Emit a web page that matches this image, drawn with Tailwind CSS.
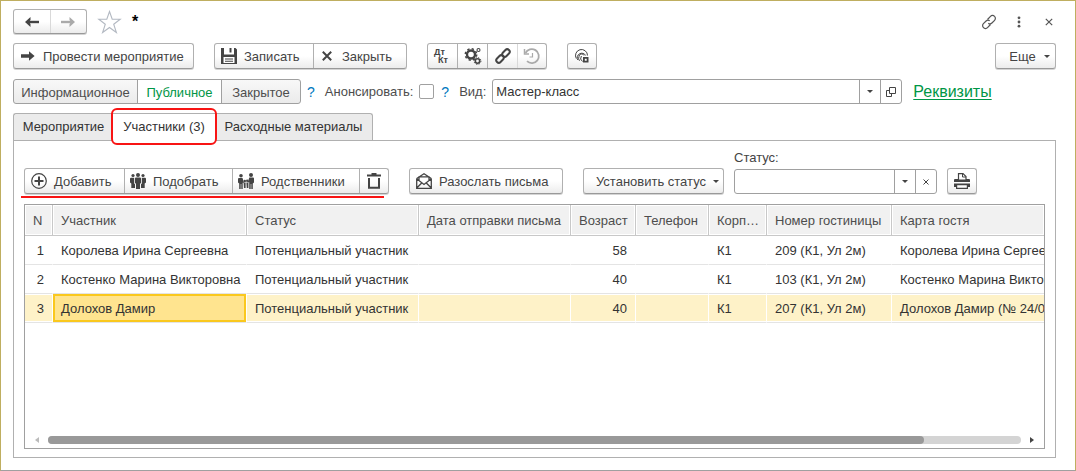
<!DOCTYPE html>
<html lang="ru">
<head>
<meta charset="utf-8">
<title>Мероприятие</title>
<script src="https://cdn.jsdelivr.net/npm/@tailwindcss/browser@4"></script>
</head>
<body class="bg-white font-['Liberation_Sans',Arial,sans-serif] text-[13px] leading-4 text-[#4d4d4d]">
<svg class="hidden" aria-hidden="true">
  <symbol id="caret" viewBox="0 0 8 4"><path d="M0 0h8L4 4z" fill="#444"/></symbol>
</svg>
<main class="flex h-screen min-h-[400px] flex-col border border-[#bfae60] border-b-[#a0a0a0] pt-2 pr-[19px] pb-3 pl-3">

  <header class="flex h-[25px] shrink-0 items-center">
    <div class="flex h-[25px] w-[74px] rounded-[3px] border border-[#b0b0b0] border-b-[#999] bg-linear-to-b from-white from-50% to-[#ececec] shadow-[0_1px_0_#d4d4d4]">
      <button aria-label="Назад" class="flex flex-1 items-center justify-center border-r border-[#d9d9d9]">
        <svg width="14" height="10" viewBox="0 0 14 10"><path d="M14 5H2" fill="none" stroke="#444" stroke-width="2.400"/><path d="M0 5L5.500 0v3L4 5l1.500 2v3z" fill="#444"/></svg>
      </button>
      <button aria-label="Вперед" class="flex flex-1 items-center justify-center">
        <svg width="14" height="10" viewBox="0 0 14 10"><path d="M0 5h12" fill="none" stroke="#aaa" stroke-width="2.400"/><path d="M14 5L8.500 0v3L10 5 8.500 7v3z" fill="#aaa"/></svg>
      </button>
    </div>
    <button aria-label="В избранное" class="ml-2.5">
      <svg width="25" height="24" viewBox="0 0 25 24"><path d="M12.500 1.500l2.700 7.700h8l-6.500 5 2.700 8.300-6.900-5-6.900 5 2.700-8.300-6.500-5h8z" fill="#fff" stroke="#b3b9c2" stroke-width="1.100"/></svg>
    </button>
    <h1 class="ml-2.5 text-base font-bold text-black">*</h1>
    <div class="mr-[3px] ml-auto flex items-center">
      <button aria-label="Получить ссылку">
        <svg width="16" height="16" viewBox="0 0 16 16" fill="none" stroke="#555" stroke-width="1.200"><path d="M6.500 5.500l3-3.200a2.700 2.700 0 0 1 4 .1 2.700 2.700 0 0 1 .1 3.900l-2.700 2.700a2.700 2.700 0 0 1-3.600.2M9.500 10.500l-3 3.200a2.700 2.700 0 0 1-4-.1 2.700 2.700 0 0 1-.1-3.900L5.100 7a2.700 2.700 0 0 1 3.600-.2"/></svg>
      </button>
      <button aria-label="Меню" class="ml-5">
        <svg width="4" height="12" viewBox="0 0 4 12" fill="#555"><circle cx="2" cy="1.800" r="1.400"/><circle cx="2" cy="6" r="1.400"/><circle cx="2" cy="10.200" r="1.400"/></svg>
      </button>
      <button aria-label="Закрыть окно" class="ml-6">
        <svg width="8" height="8" viewBox="0 0 8 8"><path d="M.8.8l6.400 6.400M7.200.8L.8 7.200" stroke="#555" stroke-width="1.200"/></svg>
      </button>
    </div>
  </header>

  <div class="mt-[9px] flex h-[27px] shrink-0 gap-5 text-[#444]">
    <button class="flex h-[26px] w-[181px] items-center rounded-[3px] border border-[#b0b0b0] border-b-[#999] bg-linear-to-b from-white from-50% to-[#ececec] pl-[7px] shadow-[0_1px_0_#d4d4d4]">
      <svg width="14" height="10" viewBox="0 0 14 10"><path d="M0 3.300h8V.3L13.600 5 8 9.700v-3H0z" fill="#444"/></svg>
      <span class="ml-2 pt-0.5 whitespace-nowrap">Провести мероприятие</span>
    </button>
    <div class="flex h-[26px] rounded-[3px] border border-[#b0b0b0] border-b-[#999] bg-linear-to-b from-white from-50% to-[#ececec] shadow-[0_1px_0_#d4d4d4]">
      <button class="flex w-[99px] items-center border-r border-[#b0b0b0] pl-1.5">
        <svg width="16" height="16" viewBox="0 0 16 16"><path d="M0 0h3v6.500h10V0h1.500L16 1.500V16H0z" fill="#444"/><path d="M8.500 0h2v4.500h-2z" fill="#444"/><path d="M2.500 9h11v6h-11z" fill="#fff"/><path d="M4 10.500h8v1H4zM4 12.800h8v1H4z" fill="#444"/></svg>
        <span class="ml-[7px] pt-0.5">Записать</span>
      </button>
      <button class="flex w-[92px] items-center pl-2">
        <svg width="10" height="10" viewBox="0 0 10 10"><path d="M.8.8l8.400 8.400M9.200.8L.8 9.200" stroke="#444" stroke-width="2"/></svg>
        <span class="ml-2.5 pt-0.5">Закрыть</span>
      </button>
    </div>
    <div class="flex h-[26px] w-[120px] rounded-[3px] border border-[#b0b0b0] border-b-[#999] bg-linear-to-b from-white from-50% to-[#ececec] shadow-[0_1px_0_#d4d4d4]">
      <button aria-label="Дебет и кредит" class="flex w-[30px] shrink-0 flex-col items-start border-r border-[#b0b0b0] pt-1 pl-1.5 text-[9px] leading-2 font-bold"><span>Дт</span><span class="pl-1">Кт</span></button>
      <button aria-label="Настройки" class="flex w-[30px] shrink-0 items-center justify-center border-r border-[#b0b0b0]">
        <svg width="18" height="18" viewBox="0 0 18 18" fill="none" stroke="#444"><circle cx="7" cy="7.500" r="4" stroke-width="2.400"/><circle cx="7" cy="7.500" r="5.700" stroke-width="1.500" stroke-dasharray="2.240 2.240"/><circle cx="14.500" cy="3" r="1.500" stroke-width="1.100"/><circle cx="13.500" cy="14" r="2.200" stroke-width="1.600"/><circle cx="13.500" cy="14" r="3.400" stroke-width="1" stroke-dasharray="1.340 1.340"/></svg>
      </button>
      <button aria-label="Ссылка" class="flex w-[30px] shrink-0 items-center justify-center border-r border-[#d9d9d9]">
        <svg width="18" height="18" viewBox="0 0 18 18" fill="none" stroke="#444" stroke-width="2"><rect x="-4.200" y="-2.500" width="8.400" height="5" rx="2.500" transform="translate(12 6) rotate(-45)"/><rect x="-4.200" y="-2.500" width="8.400" height="5" rx="2.500" transform="translate(6 12) rotate(-45)"/></svg>
      </button>
      <button aria-label="История" class="flex flex-1 items-center justify-center">
        <svg width="18" height="18" viewBox="0 0 18 18" fill="none" stroke="#aaa" stroke-width="1.800"><path d="M2.500 6A7 7 0 1 1 4 14.200"/><path d="M1.500 2v5h4.500" stroke-width="1.500"/><path d="M9.500 6v4H6.500" stroke-width="1.200"/></svg>
      </button>
    </div>
    <button aria-label="Доступ" class="flex h-[26px] w-[30px] items-center justify-center rounded-[3px] border border-[#b0b0b0] border-b-[#999] bg-linear-to-b from-white from-50% to-[#ececec] shadow-[0_1px_0_#d4d4d4]">
      <svg width="16" height="16" viewBox="0 0 16 16" fill="none" stroke="#444" stroke-width="1"><path d="M2.300 10.500A6 6 0 1 1 13.500 7.500M3.800 12A4.300 4.300 0 1 1 11.700 7.500M5.500 12.800A4 4 0 0 1 5 8.500a2.600 2.600 0 0 1 5-1M8.500 13.500A4 4 0 0 1 7.400 8"/><path d="M9.900 9.900h3.700v3.700H9.900z" fill="#fff" stroke-width="1.800"/></svg>
    </button>
    <button class="ml-auto flex h-[26px] w-[61px] items-center justify-center gap-2 rounded-[3px] border border-[#b0b0b0] border-b-[#999] bg-linear-to-b from-white from-50% to-[#ececec] pl-2 shadow-[0_1px_0_#d4d4d4]"><span class="pt-0.5">Еще</span><svg width="6" height="3"><use href="#caret"/></svg></button>
  </div>

  <div class="mt-[9px] flex h-[25px] shrink-0 items-center whitespace-nowrap">
    <div class="flex h-[25px] w-[288px] overflow-hidden rounded-[3px] border border-[#a0a0a0] bg-linear-to-b from-[#f8f8f8] to-[#ebebeb]">
      <button class="w-[124px] border-r border-[#a0a0a0] pt-0.5">Информационное</button>
      <button class="w-[84px] border-r border-[#a0a0a0] bg-white pt-0.5 text-[#009646]">Публичное</button>
      <button class="flex-1 pt-0.5">Закрытое</button>
    </div>
    <button class="ml-1.5 text-sm text-[#0078be]" aria-label="Подсказка">?</button>
    <label for="announce" class="ml-2.5">Анонсировать:</label>
    <input id="announce" type="checkbox" class="ml-1.5 size-[15px] appearance-none rounded-[2px] border border-[#a0a0a0] bg-white checked:bg-[#009646]">
    <button class="ml-[7px] text-sm text-[#0078be]" aria-label="Подсказка">?</button>
    <label for="kind" class="ml-2.5">Вид:</label>
    <div class="ml-1.5 flex h-[25px] w-[410px] rounded-[3px] border border-[#a0a0a0]">
      <input id="kind" type="text" value="Мастер-класс" class="min-w-0 flex-1 pl-[3px] text-[#333] outline-none">
      <button aria-label="Выбрать вид" class="flex w-[21px] items-center justify-center border-l border-[#a0a0a0]"><svg width="6" height="3"><use href="#caret"/></svg></button>
      <button aria-label="Открыть вид" class="flex w-[21px] items-center justify-center border-l border-[#a0a0a0]"><svg width="10" height="10" viewBox="0 0 10 10" fill="none" stroke="#444"><path d="M3.500.5h6v6h-6zM3.500 3.500h-3v6h5v-3"/></svg></button>
    </div>
    <a href="#" class="ml-[11px] pt-px text-base leading-[18px] text-[#009646] underline underline-offset-2">Реквизиты</a>
  </div>

  <div role="tablist" class="mt-[9px] flex h-[27px] shrink-0 whitespace-nowrap text-[#333]">
    <button role="tab" class="w-[100px] rounded-tl-[3px] border-t border-l border-[#b0b0b0] bg-[#ebebeb]">Мероприятие</button>
    <div class="relative z-10 -mb-px flex w-[102px]">
      <button role="tab" aria-selected="true" class="flex-1 border-t border-[#b0b0b0] bg-white pb-px">Участники (3)</button>
      <span class="pointer-events-none absolute -top-[5px] -right-[2px] -bottom-[4px] -left-[2px] rounded-[6px] border-2 border-[#f81414]"></span>
    </div>
    <button role="tab" class="w-[158px] rounded-tr-[3px] border-t border-r border-[#b0b0b0] bg-[#ebebeb]">Расходные материалы</button>
  </div>

  <section class="flex min-h-0 flex-1 flex-col border border-[#b0b0b0] px-2.5 pt-2 pb-2">
    <div class="flex shrink-0 items-end whitespace-nowrap text-[#444]">
      <div class="relative">
        <div class="flex h-[26px] w-[365px] rounded-[3px] border border-[#b0b0b0] border-b-[#999] bg-linear-to-b from-white from-50% to-[#ececec] shadow-[0_1px_0_#d4d4d4]">
          <button class="flex w-[100px] items-center border-r border-[#b0b0b0] pl-1.5">
            <svg width="16" height="16" viewBox="0 0 16 16" fill="none" stroke="#444"><circle cx="8" cy="8" r="7.300" stroke-width="1.200"/><path d="M8 3.500v9M3.500 8h9" stroke-width="2"/></svg>
            <span class="ml-[7px] pt-0.5">Добавить</span>
          </button>
          <button class="flex w-[108px] items-center border-r border-[#b0b0b0] pl-[5px]">
            <svg width="16" height="16" viewBox="0 0 16 16" fill="#444"><circle cx="8" cy="2" r="2"/><path d="M5 5.500q0-1 1-1h4q1 0 1 1V10l-1 .8V16H6v-5.200L5 10z"/><circle cx="3" cy="2.500" r="1.600"/><circle cx="13" cy="2.500" r="1.600"/><path d="M0 6q0-1.200 1-1.200h3.200V10.500l.8.700V15H1.300v-4.500L0 9.500zM16 6q0-1.200-1-1.200h-3.200V10.500l-.8.700V15h3.700v-4.500L16 9.500z"/></svg>
            <span class="ml-[7px] pt-0.5">Подобрать</span>
          </button>
          <button class="flex w-[127px] items-center border-r border-[#b0b0b0] pl-[5px]">
            <svg width="16" height="16" viewBox="0 0 16 16" fill="#444"><circle cx="3" cy="2.800" r="1.800"/><circle cx="13" cy="2" r="2"/><path d="M0 6q0-1 1-1h3.500l1.500 4.500-1 .5-.3-.6V16H3.300v-5h-.6v5H1.200v-5.500L0 9.500zM16 5.500q0-1-1-1h-3.700L9.800 9l1 .6.400-.6v7h1.500v-5h.6v5h1.500v-5.500l1.200-1z"/><circle cx="6.800" cy="8" r="1.200"/><circle cx="9.200" cy="7.800" r="1.200"/><path d="M5.600 9.500h2v5.500H6zM8.400 9.500h2V15H8.800z"/></svg>
            <span class="ml-[7px] pt-0.5">Родственники</span>
          </button>
          <button aria-label="Удалить" class="flex flex-1 items-center justify-center">
            <svg width="14" height="16" viewBox="0 0 14 16"><path d="M2 5v9.800h10V5" fill="none" stroke="#444" stroke-width="2"/><path d="M0 1.500h4.500V0h5v1.500H14v2H0z" fill="#444"/></svg>
          </button>
        </div>
        <span class="pointer-events-none absolute -bottom-[4px] -left-[3px] h-[2px] w-[363px] bg-[#f81414]"></span>
      </div>
      <button class="ml-5 flex h-[26px] w-[154px] items-center rounded-[3px] border border-[#b0b0b0] border-b-[#999] bg-linear-to-b from-white from-50% to-[#ececec] pl-1.5 shadow-[0_1px_0_#d4d4d4]">
        <svg width="16" height="16" viewBox="0 0 16 16" fill="none" stroke="#444" stroke-width="1.300"><path d="M.7 5.500v9.800h14.600V5.500M.7 5.500L8 .8l7.300 4.700M.7 15l5-5M15.300 15l-5-5M.7 5.800L8 11.500l7.300-5.700M3 7V3.800h10V7"/></svg>
        <span class="ml-[7px] pt-0.5">Разослать письма</span>
      </button>
      <button class="ml-5 flex h-[26px] w-[141px] items-center justify-center gap-[7px] rounded-[3px] border border-[#b0b0b0] border-b-[#999] bg-linear-to-b from-white from-50% to-[#ececec] pl-2 shadow-[0_1px_0_#d4d4d4]"><span class="pt-0.5">Установить статус</span><svg width="6" height="3"><use href="#caret"/></svg></button>
      <div class="ml-2.5 flex flex-col gap-[3px]">
        <label for="status" class="pt-px">Статус:</label>
        <div class="flex h-[25px] w-[203px] rounded-[3px] border border-[#a0a0a0]">
          <input id="status" type="text" class="min-w-0 flex-1 pl-1 outline-none">
          <button aria-label="Выбрать статус" class="flex w-[21px] items-center justify-center border-l border-[#a0a0a0]"><svg width="6" height="3"><use href="#caret"/></svg></button>
          <button aria-label="Очистить статус" class="flex w-[21px] items-center justify-center border-l border-[#a0a0a0]"><svg width="6" height="6" viewBox="0 0 6 6"><path d="M.5.5l5 5M5.500.5l-5 5" stroke="#444"/></svg></button>
        </div>
      </div>
      <button aria-label="Печать" class="ml-2.5 flex h-[26px] w-[30px] items-center justify-center rounded-[3px] border border-[#b0b0b0] border-b-[#999] bg-linear-to-b from-white from-50% to-[#ececec] shadow-[0_1px_0_#d4d4d4]">
        <svg width="16" height="16" viewBox="0 0 16 16"><path d="M0 6.500L1 6h14l1 .5V9H0zM0 10.500h16V14H0z" fill="#444"/><path d="M4.500 7V.6h4.500l3 3V7z" fill="#fff" stroke="#444" stroke-width="1.200"/><path d="M3 7h10v2H3z" fill="#444"/><path d="M8.500.6v3.400H12" fill="none" stroke="#444"/><path d="M2.600 11.600h10.800v3.800H2.600z" fill="#fff" stroke="#444" stroke-width="1.200"/></svg>
      </button>
    </div>

    <div class="mt-2.5 flex min-h-0 flex-1 flex-col overflow-hidden border border-[#a0a0a0]">
      <table class="w-full table-fixed border-separate border-spacing-0 whitespace-nowrap text-[#333]">
        <colgroup><col class="w-[28px]"><col class="w-[194px]"><col class="w-[172px]"><col class="w-[152px]"><col class="w-[65px]"><col class="w-[73px]"><col class="w-[58px]"><col class="w-[125px]"><col></colgroup>
        <thead>
          <tr class="h-[31px] text-left text-[#4d4d4d] *:overflow-hidden *:border-r *:border-b *:border-[#c8c8c8] *:bg-[#f1f1f1] *:p-0 *:pt-px *:pl-2 *:font-normal *:shadow-[inset_0_0_0_1px_#fff]">
            <th>N</th><th>Участник</th><th>Статус</th><th>Дата отправки письма</th><th>Возраст</th><th>Телефон</th><th>Корп…</th><th>Номер гостиницы</th><th class="border-r-0!">Карта гостя</th>
          </tr>
        </thead>
        <tbody>
          <tr class="h-[29px] *:overflow-hidden *:border-r *:border-b *:border-r-white *:border-b-[#e4e4e4] *:p-0 *:pt-0.5 *:pl-2">
            <td class="pr-2! text-right">1</td><td>Королева Ирина Сергеевна</td><td>Потенциальный участник</td><td></td><td class="pr-2! text-right">58</td><td></td><td>К1</td><td>209 (К1, Ул 2м)</td><td class="border-r-0!">Королева Ирина Сергеевна</td>
          </tr>
          <tr class="h-[29px] *:overflow-hidden *:border-r *:border-b *:border-r-white *:border-b-[#e4e4e4] *:p-0 *:pt-0.5 *:pl-2">
            <td class="pr-2! text-right">2</td><td>Костенко Марина Викторовна</td><td>Потенциальный участник</td><td></td><td class="pr-2! text-right">40</td><td></td><td>К1</td><td>103 (К1, Ул 2м)</td><td class="border-r-0!">Костенко Марина Викторовна</td>
          </tr>
          <tr class="h-[29px] *:overflow-hidden *:border-r *:border-b *:border-r-white *:border-b-[#e4e4e4] *:bg-[#fef2c8] *:p-0 *:pt-0.5 *:pl-2 *:shadow-[inset_0_1px_0_#fff,inset_0_-1px_0_#fff]">
            <td class="pr-2! text-right">3</td><td class="bg-[#ffe48f]! shadow-[inset_0_0_0_2px_#fac81e]!">Долохов Дамир</td><td>Потенциальный участник</td><td></td><td class="pr-2! text-right">40</td><td></td><td>К1</td><td>207 (К1, Ул 2м)</td><td class="border-r-0!">Долохов Дамир (№ 24/001)</td>
          </tr>
        </tbody>
      </table>
      <div class="mt-auto mb-1 flex h-2 shrink-0 items-center pr-2.5 pl-2.5">
        <svg width="4" height="6" viewBox="0 0 4 6"><path d="M4 0v6L0 3z" fill="#bbb"/></svg>
        <div class="mx-[9px] h-2 flex-1 rounded-full bg-[#d4d4d4]"><div class="h-2 w-[90%] rounded-full bg-[#999]"></div></div>
        <svg width="4" height="6" viewBox="0 0 4 6"><path d="M0 0v6l4-3z" fill="#444"/></svg>
      </div>
    </div>
  </section>
</main>
</body>
</html>
